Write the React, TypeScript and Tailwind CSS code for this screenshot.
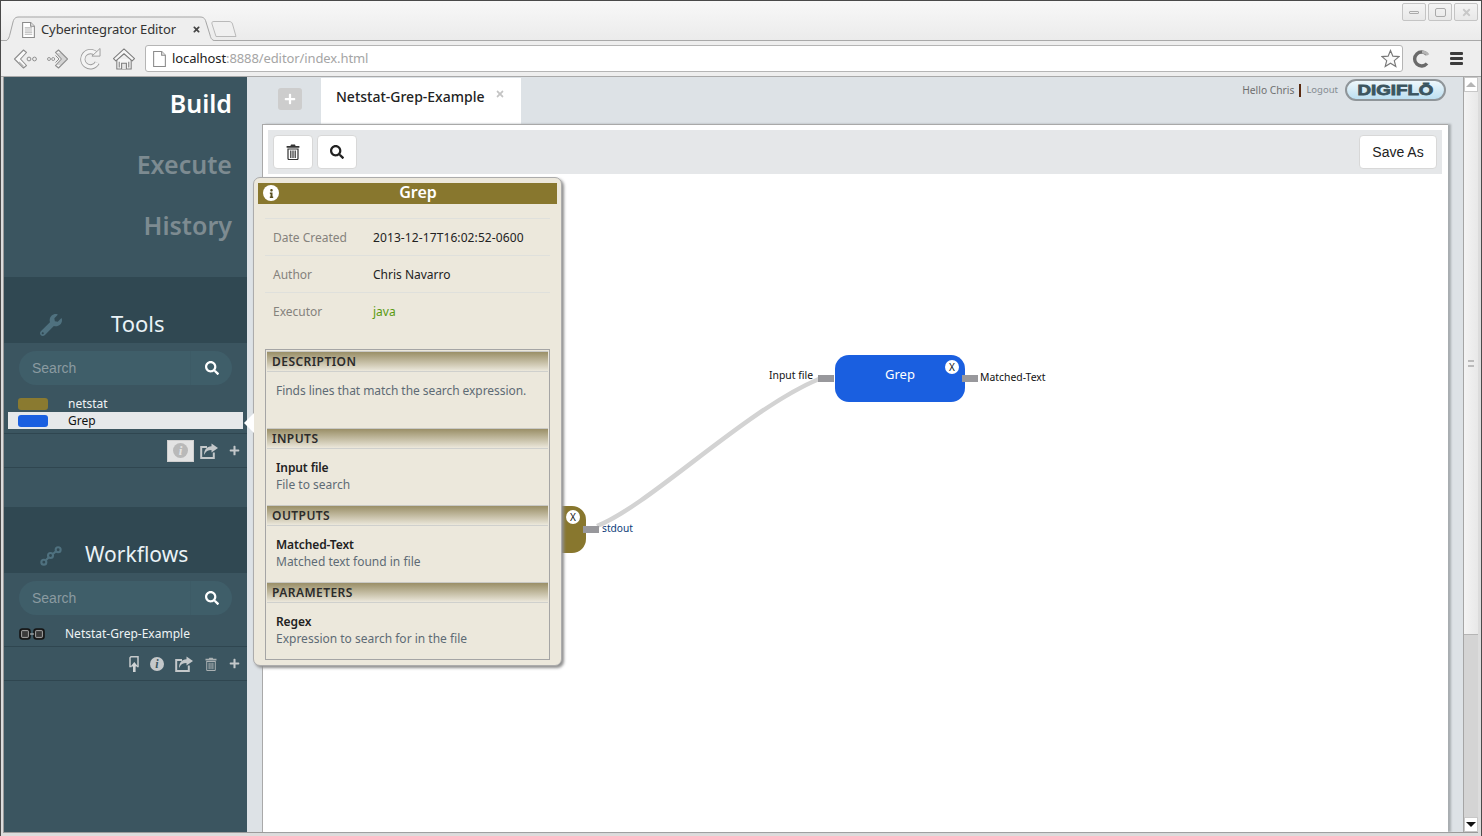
import React from "react";
import { FaSearch, FaPlus, FaInfo, FaWrench, FaTimes } from "react-icons/fa";

const Trash = ({ className }: { className?: string }) => (
  <svg viewBox="0 0 14 16" className={className} fill="none">
    <path d="M5 .6h4l.6 1.4H13.4V3.8H.6V2H4.4z" fill="currentColor" />
    <path d="M2 5H12V14.6A1 1 0 0 1 11 15.6H3A1 1 0 0 1 2 14.6Z" stroke="currentColor" strokeWidth="1.2" />
    <path d="M4.8 6.5V14M7 6.5V14M9.2 6.5V14" stroke="currentColor" strokeWidth="1.2" />
  </svg>
);

const Share = ({ className }: { className?: string }) => (
  <svg viewBox="0 0 18 16" className={className} fill="none">
    <path d="M7 4H1.2V15H13.8V9.5" stroke="currentColor" strokeWidth="2" />
    <path d="M11.5 0.5 L18 5 L11.5 9.5 V7 C8 7 5.5 8.3 4 12 C4 7 6.8 3.4 11.5 3.2 Z" fill="currentColor" />
  </svg>
);

const InfoDot = ({ className }: { className: string }) => (
  <div className={`rounded-full flex items-center justify-center font-['Liberation_Serif',serif] italic font-bold ${className}`}>i</div>
);

const Back = () => (
  <svg viewBox="0 0 25 24" className="w-[25px] h-[24px]" fill="none">
    <path d="M10.5 3 L1.5 12 L10.5 21 L13.5 18.5 L7.5 12 L13.5 5.5 Z" fill="#fafafa" stroke="#8f8f8f" strokeWidth="1.1" strokeLinejoin="round" />
    <path d="M6 15 L10.5 19.5" stroke="#b5b5b5" strokeWidth="1.4" />
    <circle cx="16" cy="12" r="1.9" stroke="#8f8f8f" strokeWidth="1" />
    <circle cx="21.5" cy="12" r="1.9" stroke="#8f8f8f" strokeWidth="1" />
  </svg>
);
const Forward = () => (
  <svg viewBox="0 0 22 24" className="w-[22px] h-[24px]" fill="none">
    <circle cx="2" cy="12" r="1.5" stroke="#8f8f8f" strokeWidth="0.9" />
    <circle cx="6.2" cy="12" r="1.5" stroke="#8f8f8f" strokeWidth="0.9" />
    <path d="M11.5 3 L20.5 12 L11.5 21 L8.5 18.5 L14.5 12 L8.5 5.5 Z" fill="#f2f2f2" stroke="#8f8f8f" strokeWidth="1.1" strokeLinejoin="round" />
    <path d="M10.5 6 L16.5 12 L10.5 18 M12.5 6 L18.5 12 L12.5 18" stroke="#a5a5a5" strokeWidth="0.8" />
    <path d="M8.5 8.5 L12 12 L8.5 15.5" stroke="#8f8f8f" strokeWidth="1" />
  </svg>
);
const Reload = () => (
  <svg viewBox="0 0 22 24" className="w-[21px] h-[23px]" fill="none">
    <path d="M17 7.5 A8 8 0 1 0 18 16.5" stroke="#9c9c9c" strokeWidth="5.4" />
    <path d="M17 7.5 A8 8 0 1 0 18 16.5" stroke="#f4f4f4" strokeWidth="3.6" />
    <path d="M12.5 9.5 L21 9.5 L21 1.5 Z" fill="#f2f2f2" stroke="#9c9c9c" strokeWidth="1" strokeLinejoin="round" />
  </svg>
);
const Home = () => (
  <svg viewBox="0 0 23 24" className="w-[22px] h-[24px]" fill="none">
    <path d="M4 12 V22.5 H19 V12" fill="#f6f6f6" stroke="#7c7c7c" strokeWidth="1.1" />
    <path d="M11.5 1.5 L22.5 11.5 L20 14 L11.5 6.5 L3 14 L.5 11.5 Z" fill="#f6f6f6" stroke="#7c7c7c" strokeWidth="1.1" strokeLinejoin="round" />
    <path d="M9 22.5 V16.5 H14 V22.5" fill="#e6e6e6" stroke="#7c7c7c" strokeWidth="1.1" />
    <path d="M6.5 21 V15 M16.5 21 V15" stroke="#7c7c7c" strokeWidth="1.1" />
  </svg>
);
const PageIcon = ({ lines }: { lines?: boolean }) => (
  <svg viewBox="0 0 12 15" className="w-[13px] h-[16px]" fill="none">
    <path d="M.5.5H8L11.5 4V14.5H.5Z" fill="#fff" stroke="#8b8b8b" />
    <path d="M8 .5V4H11.5" stroke="#8b8b8b" fill="#e8e8e8" />
    {lines && <path d="M2.5 5.5H9.5M2.5 7.5H9.5M2.5 9.5H9.5M2.5 11.5H9.5" stroke="#b5b5b5" />}
  </svg>
);
const Star = () => (
  <svg viewBox="0 0 20 20" className="w-[19px] h-[19px]" fill="none">
    <path d="M10 1.5 L12.5 7.5 L19 8 L14 12.2 L15.6 18.5 L10 15 L4.4 18.5 L6 12.2 L1 8 L7.5 7.5 Z" stroke="#777" strokeWidth="1.2" fill="#fafafa" />
  </svg>
);
const CIcon = () => (
  <svg viewBox="0 0 18 18" className="w-[18px] h-[18px]" fill="none">
    <path d="M15 4.5 A7 7 0 1 0 15 13.5" stroke="#6a6a6a" strokeWidth="3.4" />
    <path d="M10 2 A7 7 0 0 1 16 5" stroke="#b5b5b5" strokeWidth="3" />
  </svg>
);
const WorkflowIcon = () => (
  <svg viewBox="0 0 23 22" className="w-[22px] h-[21px]" fill="none" stroke="#4f717f" strokeWidth="2.2">
    <circle cx="4" cy="18" r="2.6" />
    <circle cx="11" cy="11" r="2.6" />
    <circle cx="19" cy="5" r="2.6" />
    <path d="M6 16 L9 13 M13.5 9.5 L16.8 6.5" />
  </svg>
);
const Pin = () => (
  <svg viewBox="0 0 10 16" className="w-[10px] h-[16px]" fill="none">
    <path d="M2.5 10.5H1V1.8L2 .8H9V10.5H8" stroke="#c6cacb" strokeWidth="1.5" />
    <path d="M5.3 6 L9 10.5 H6.6 V16 H4 V10.5 H1.6 Z" fill="#d0d3d5" />
  </svg>
);
const Glasses = () => (
  <svg viewBox="0 0 26 12" className="w-[26px] h-[12px]" fill="none">
    <rect x="1" y="1" width="10" height="10" rx="2.5" fill="#3a3a3a" stroke="#151515" strokeWidth="1.6" />
    <rect x="15" y="1" width="10" height="10" rx="2.5" fill="#3a3a3a" stroke="#151515" strokeWidth="1.6" />
    <rect x="2.6" y="2.6" width="6.8" height="6.8" rx="1" stroke="#d0d0d0" strokeWidth="0.7" />
    <rect x="16.6" y="2.6" width="6.8" height="6.8" rx="1" stroke="#d0d0d0" strokeWidth="0.7" />
    <path d="M11 6 H15" stroke="#c8c8c8" strokeWidth="1" />
  </svg>
);

const SearchBox = () => (
  <div className="mx-[15px] h-[34px] rounded-[17px] bg-[#3f5e69] flex items-center pl-[13px] pr-[13px]">
    <span className="flex-1 h-full leading-[34px] border-r border-[#3d5b66] text-[14px] text-[#8b9ba1] font-['Liberation_Sans',sans-serif]">Search</span>
    <FaSearch className="ml-[14px] text-white w-[14px] h-[14px]" />
  </div>
);

const PanelHeader = ({ icon, title, cx }: { icon: React.ReactNode; title: string; cx: string }) => (
  <div className="h-[66px] bg-[#304852] relative flex items-end pb-[4px]">
    <div className="w-[35px] shrink-0" />
    <div className="w-[23px] h-[28px] shrink-0 flex items-center justify-center">{icon}</div>
    <div className={`leading-[32px] text-[#eaf2f6] ${cx}`}>{title}</div>
  </div>
);

const ActionRow = ({ children }: { children: React.ReactNode }) => (
  <div className="h-[35px] border-y border-[#2f4650] flex items-center justify-end pr-[7px] text-[#c4c8ca]">{children}</div>
);

const Section = ({ title, children, h }: { title: string; children: React.ReactNode; h: string }) => (
  <div className={h}>
    <div className="mx-px h-[21px] bg-gradient-to-b from-[#9a8f67] to-[#ece8dc] border-y border-t-[#c9c9c5] border-b-[#cfd0cd] pl-[5px] text-[12px] leading-[19px] font-semibold tracking-[0.45px] text-[#2b2b2b]">
      {title}
    </div>
    <div className="pl-[10px]">{children}</div>
  </div>
);

const Param = ({ name, desc }: { name: string; desc: string }) => (
  <div className="pt-[10px]">
    <div className="text-[12px] leading-[17px] font-semibold tracking-[-0.1px] text-[#222]">{name}</div>
    <div className="text-[12px] leading-[17px] text-[#5e6b75]">{desc}</div>
  </div>
);

const MetaRow = ({ label, value, cls }: { label: string; value: string; cls: string }) => (
  <div className="h-[37px] border-t border-[#dfe0dc] flex items-center pl-[8px] pt-[2px]">
    <div className="w-[100px] text-[12px] text-[#85827c]">{label}</div>
    <div className={`text-[12px] ${cls}`}>{value}</div>
  </div>
);

const CloseDot = ({ className }: { className: string }) => (
  <div className={`absolute w-[14px] h-[14px] rounded-full bg-white text-[#111] text-[10px] leading-[14px] text-center ${className}`}>X</div>
);

const WinBtn = ({ children }: { children: React.ReactNode }) => (
  <div className="w-[24px] h-[18px] border border-[#c4c4c4] rounded-[2px] bg-gradient-to-b from-[#f4f4f4] to-[#e8e8e8] flex items-center justify-center text-[#aaa]">{children}</div>
);

export default function App() {
  return (
    <div className="w-[1482px] h-[836px] relative overflow-hidden flex flex-col bg-[#e9e9e9] border border-[#4a4a4a] border-b-0 font-['Noto_Sans','Open_Sans',sans-serif]">
      {/* Title / tab strip */}
      <div className="h-[39px] shrink-0 bg-gradient-to-b from-[#f8f8f8] to-[#ebebeb] flex items-end pl-[3px] relative">
        <div className="w-[214px] h-[24px] relative flex items-center pl-[18px] pr-[18px] pt-[3px]">
          <svg className="absolute left-0 top-0 w-[214px] h-[25px]" viewBox="0 0 214 25" fill="none">
            <path d="M0 25 C4 25 5 22 6 18 L9 6 C10 2 12 1 15 1 H196 C199 1 201 2 202 6 L206 19 C207 23 208 25 214 25" fill="#eeeeee" stroke="#a5a5a5" />
          </svg>
          <div className="relative"><PageIcon lines /></div>
          <span className="relative ml-[6px] text-[13px] tracking-[-0.1px] text-[#333] font-['Noto_Sans',sans-serif]">Cyberintegrator Editor</span>
          <FaTimes className="relative ml-auto mr-[-1px] w-[9px] h-[9px] text-[#444]" />
        </div>
        <svg className="ml-[-8px] mb-[3px] w-[27px] h-[16px] relative" viewBox="0 0 27 16" fill="none">
          <path d="M6 15.5 L2 3 C1.5 1.5 2 .5 4 .5 H19 C21 .5 22 1.5 22.5 3 L26 15.5 Z" fill="#f0f0f0" stroke="#b9b9b9" />
        </svg>
        <div className="absolute right-[3px] top-[2px] flex gap-[2px]">
          <WinBtn><div className="w-[10px] h-[3px] border border-[#aaa] rounded-[1px]" /></WinBtn>
          <WinBtn><div className="w-[11px] h-[9px] border border-[#aaa] rounded-[2px]" /></WinBtn>
          <WinBtn><FaTimes className="w-[11px] h-[11px] text-[#c8c8c8]" /></WinBtn>
        </div>
      </div>

      {/* Toolbar */}
      <div className="h-[37px] shrink-0 bg-[#eeeeee] border-t border-b border-[#a9a9a9] flex items-center">
        <div className="w-[12px]" />
        <Back />
        <div className="w-[9px]" />
        <Forward />
        <div className="w-[11px]" />
        <Reload />
        <div className="w-[12px]" />
        <Home />
        <div className="w-[10px]" />
        <div className="w-[1258px] h-[27px] rounded-[3px] border border-[#b5b5b5] bg-white flex items-center pl-[7px] pr-[2px] text-[13px] font-['Noto_Sans',sans-serif] tracking-[-0.1px]">
          <PageIcon />
          <span className="ml-[6px] text-[#222]">localhost</span>
          <span className="text-[#a5a5a5]">:8888/editor/index.html</span>
          <div className="ml-auto"><Star /></div>
        </div>
        <div className="w-[9px]" />
        <CIcon />
        <div className="w-[20px]" />
        <div className="w-[13px] flex flex-col gap-[2px]">
          <div className="h-[3px] rounded-[1px] bg-[#3c3c3c]" />
          <div className="h-[3px] rounded-[1px] bg-[#3c3c3c]" />
          <div className="h-[3px] rounded-[1px] bg-[#3c3c3c]" />
        </div>
      </div>

      {/* Page */}
      <div className="flex-1 min-h-0 flex pl-[2px] pr-[3px] pb-[3px] bg-[#dcdcdc]">
        <div className="flex-1 min-h-0 flex border-l border-b border-[#9a9a9a]">
          {/* Sidebar */}
          <aside className="w-[243px] shrink-0 bg-[#3b5560] flex flex-col">
            <div className="h-[200px] flex flex-col items-end pr-[15px] pt-[7px] gap-[23px] text-[25px] leading-[38px] font-semibold">
              <div className="text-white">Build</div>
              <div className="text-[#7d8b91]">Execute</div>
              <div className="text-[#7d8b91]">History</div>
            </div>
            <PanelHeader
              icon={<FaWrench className="w-[22px] h-[22px] text-[#4f717f]" />}
              title="Tools"
              cx="ml-[49px] text-[22px]"
            />
            <div className="pt-[8px]"><SearchBox /></div>
            <div className="pt-[10px]">
              <div className="h-[17px] flex items-center pl-[14px] text-[12px] text-[#eef3f5]">
                <div className="w-[30px] h-[12px] rounded-[3px] bg-[#8a7a30]" />
                <span className="ml-[20px]">netstat</span>
              </div>
              <div className="h-[17px] ml-[4px] mr-[4px] bg-[#e6e8ea] flex items-center pl-[10px] text-[12px] text-[#111]">
                <div className="w-[30px] h-[12px] rounded-[3px] bg-[#1a5fe0]" />
                <span className="ml-[20px]">Grep</span>
              </div>
            </div>
            <div className="pt-[4px]">
              <ActionRow>
                <div className="w-[27px] h-[22px] bg-[#e3e3e3] border border-[#cfcfcf] flex items-center justify-center">
                  <InfoDot className="w-[15px] h-[15px] bg-[#b9b9b9] text-[#e3e3e3] text-[13px]" />
                </div>
                <Share className="ml-[6px] w-[18px] h-[16px]" />
                <FaPlus className="ml-[11px] w-[11px] h-[11px]" />
              </ActionRow>
            </div>
            <div className="h-[39px]" />
            <PanelHeader icon={<WorkflowIcon />} title="Workflows" cx="ml-[23px] text-[21px] mb-[-1px]" />
            <div className="pt-[8px]"><SearchBox /></div>
            <div className="pt-[11px] h-[31px] pl-[15px]">
              <div className="h-[16px] flex items-center text-[12px] text-[#eef3f5]">
                <Glasses />
                <span className="ml-[20px]">Netstat-Grep-Example</span>
              </div>
            </div>
            <ActionRow>
              <Pin />
              <InfoDot className="ml-[11px] w-[14px] h-[14px] bg-[#c4c8ca] text-[#3b5560] text-[12px]" />
              <Share className="ml-[11px] w-[18px] h-[16px]" />
              <Trash className="ml-[12px] w-[12px] h-[14px] text-[#a9b0b2]" />
              <FaPlus className="ml-[12px] w-[11px] h-[11px]" />
            </ActionRow>
          </aside>

          {/* Main column */}
          <main className="flex-1 min-w-0 bg-[#dde2e6] flex flex-col">
            <div className="h-[47px] shrink-0 flex relative">
              <div className="ml-[31px] mt-[11px] w-[24px] h-[22px] rounded-[3px] bg-[#cdcdcd] flex items-center justify-center">
                <FaPlus className="w-[12px] h-[12px] text-white" />
              </div>
              <div className="ml-[19px] mt-px w-[200px] h-[46px] bg-white flex items-start pl-[15px] pt-[7px] relative">
                <span className="text-[14px] leading-[24px] font-medium text-[#222]">Netstat-Grep-Example</span>
                <FaTimes className="absolute right-[16px] top-[11px] w-[10px] h-[10px] text-[#c4c4c4]" />
              </div>
              <div className="ml-auto mr-[17px] mt-[2px] flex items-start h-[22px]">
                <span className="mt-[3px] text-[10.25px] leading-[16px] text-[#6f6f6f]">Hello Chris</span>
                <div className="mt-[5px] ml-[5px] w-[2px] h-[13px] bg-[#5a2a10]" />
                <span className="mt-[3px] ml-[5px] text-[9.5px] leading-[16px] text-[#858c92]">Logout</span>
                <div className="ml-[7px] w-[101px] h-[22px] rounded-[11px] border-2 border-[#8f9599] bg-gradient-to-b from-[#eef7fb] to-[#bcdff1] flex items-center justify-center overflow-hidden">
                  <span className="inline-block scale-x-125 text-[15px] font-bold font-['Liberation_Sans',sans-serif] text-[#3b5560] [-webkit-text-stroke:0.8px_#3b5560]">DIGIFLŌ</span>
                </div>
              </div>
            </div>
            <div className="flex-1 min-h-0 ml-[15px] mr-[15px] relative bg-white border-t border-l border-[#a9a9a9] shadow-[3px_0_2px_#a8adb0]">
              <div className="mt-[5px] ml-[5px] mr-[6px] h-[44px] bg-[#e5e7e9] flex items-center pl-[5px] pr-[5px] gap-[4px]">
                <button className="w-[40px] h-[34px] bg-white rounded-[4px] border border-[#d8d8d8] flex items-center justify-center">
                  <Trash className="w-[14px] h-[16px] text-[#333]" />
                </button>
                <button className="w-[40px] h-[34px] bg-white rounded-[4px] border border-[#d8d8d8] flex items-center justify-center">
                  <FaSearch className="w-[14px] h-[14px] text-[#222]" />
                </button>
                <button className="ml-auto w-[78px] h-[34px] bg-white rounded-[4px] border border-[#d8d8d8] text-[14px] text-[#222] font-['Liberation_Sans',sans-serif]">
                  Save As
                </button>
              </div>

              {/* Free canvas: wire, nodes and ports */}
              <svg className="absolute left-0 top-0 w-[1184px] h-[707px] pointer-events-none" viewBox="0 0 1184 707" fill="none">
                <path d="M334 401 C387 380 482 285 556 254" stroke="#d3d3d3" strokeWidth="4.5" />
              </svg>
              <div className="absolute left-[193px] top-[381px] w-[130px] h-[47px] rounded-[14px] bg-[#88772e]" />
              <CloseDot className="left-[303px] top-[385px]" />
              <div className="absolute left-[320px] top-[401px] w-[16px] h-[7px] bg-[#98989c]" />
              <div className="absolute left-[339px] top-[396px] text-[10.2px] leading-[15px] text-[#0b3b78]">stdout</div>

              <div className="absolute left-[506px] top-[243px] text-[10.4px] leading-[15px] text-[#111]">Input file</div>
              <div className="absolute left-[555px] top-[250px] w-[16px] h-[7px] bg-[#98989c]" />
              <div className="absolute left-[572px] top-[230px] w-[130px] h-[47px] rounded-[14px] bg-[#1a5fe0] text-white text-[13px] leading-[38px] text-center">Grep</div>
              <CloseDot className="left-[682px] top-[235px]" />
              <div className="absolute left-[699px] top-[250px] w-[16px] h-[7px] bg-[#98989c]" />
              <div className="absolute left-[717px] top-[245px] text-[10.4px] leading-[15px] text-[#111]">Matched-Text</div>
            </div>
          </main>

          {/* Scrollbar */}
          <div className="w-[15px] shrink-0 border-l border-[#a5a5a5] bg-[#d4d4d4] flex flex-col">
            <div className="h-[15px] bg-white border border-[#c8c8c8] flex items-center justify-center text-[#aaa]">
              <div className="w-0 h-0 border-x-[5px] border-x-transparent border-b-[5px] border-b-[#b5b5b5]" />
            </div>
            <div className="h-[543px] bg-gradient-to-r from-[#f4f4f4] to-[#e8e8e8] border-b border-[#b5b5b5] flex items-center justify-center">
              <div className="w-[6px] h-[7px] border-y-2 border-[#bbb]" />
            </div>
            <div className="flex-1" />
            <div className="h-[15px] bg-white border border-[#c8c8c8] flex items-center justify-center">
              <div className="w-0 h-0 border-x-[5px] border-x-transparent border-t-[5px] border-t-[#111]" />
            </div>
          </div>
        </div>
      </div>

      {/* Popover over the canvas */}
      <div className="absolute left-[252px] top-[176px] w-[309px] h-[489px] bg-[#ece8dc] border border-[#acacac] rounded-[7px] shadow-[2px_2px_3px_#8f8f8f] px-[4px] pt-[5px]">
        <div className="absolute left-[-10px] top-[235px] w-0 h-0 border-y-[10px] border-y-transparent border-r-[10px] border-r-white" />
        <div className="h-[21px] w-[299px] bg-[#88772e] relative text-center text-white text-[16px] leading-[19px] font-semibold pl-[21px]">
          <div className="absolute left-[5px] top-[2px] w-[16px] h-[16px] rounded-full bg-white flex items-center justify-center">
            <FaInfo className="w-[9px] h-[9px] text-[#5a5020]" />
          </div>
          Grep
        </div>
        <div className="mt-[14px] ml-[7px] w-[285px]">
          <MetaRow label="Date Created" value="2013-12-17T16:02:52-0600" cls="text-[#222] tracking-[0.1px]" />
          <MetaRow label="Author" value="Chris Navarro" cls="text-[#222]" />
          <MetaRow label="Executor" value="java" cls="text-[#5a9a10]" />
        </div>
        <div className="mt-[20px] ml-[7px] w-[285px] h-[311px] border border-[#a5a5a5] pt-px">
          <Section title="DESCRIPTION" h="h-[77px]">
            <div className="pt-[10px] text-[12px] leading-[17px] tracking-[-0.06px] text-[#5e6b75]">Finds lines that match the search expression.</div>
          </Section>
          <Section title="INPUTS" h="h-[77px]"><Param name="Input file" desc="File to search" /></Section>
          <Section title="OUTPUTS" h="h-[77px]"><Param name="Matched-Text" desc="Matched text found in file" /></Section>
          <Section title="PARAMETERS" h="h-[77px]"><Param name="Regex" desc="Expression to search for in the file" /></Section>
        </div>
      </div>
    </div>
  );
}
